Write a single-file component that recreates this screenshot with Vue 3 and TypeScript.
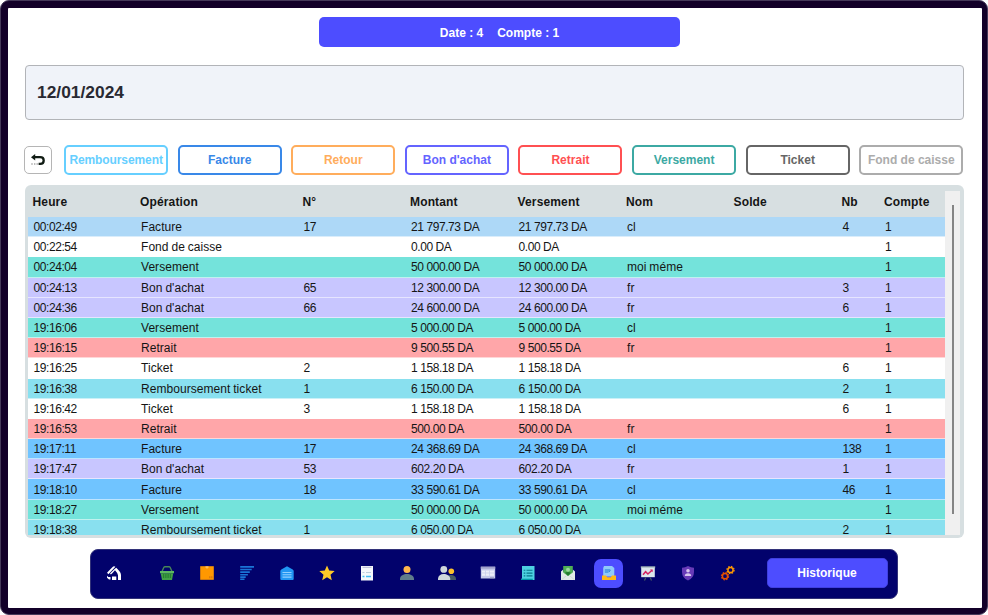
<script setup lang="ts">
interface Filter { label: string; tone: string }
interface Row { tone: string; cells: string[] }

const filters: Filter[] = [
  { label: 'Remboursement', tone: 'f-cyan' },
  { label: 'Facture', tone: 'f-blue' },
  { label: 'Retour', tone: 'f-orange' },
  { label: "Bon d'achat", tone: 'f-violet' },
  { label: 'Retrait', tone: 'f-red' },
  { label: 'Versement', tone: 'f-teal' },
  { label: 'Ticket', tone: 'f-dark' },
  { label: 'Fond de caisse', tone: 'f-grey' },
]

const headers: string[] = ['Heure', 'Opération', 'N°', 'Montant', 'Versement', 'Nom', 'Solde', 'Nb', 'Compte']

const entry = (tone: string, time: string, op: string, no: string, amount: string, name: string, nb: string): Row => ({
  tone,
  cells: [time, op, no, `${amount} DA`, `${amount} DA`, name, '', nb, '1'],
})

const rows: Row[] = [
  entry('r-pale', '00:02:49', 'Facture', '17', '21 797.73', 'cl', '4'),
  entry('r-white', '00:22:54', 'Fond de caisse', '', '0.00', '', ''),
  entry('r-teal', '00:24:04', 'Versement', '', '50 000.00', 'moi méme', ''),
  entry('r-violet', '00:24:13', "Bon d'achat", '65', '12 300.00', 'fr', '3'),
  entry('r-violet', '00:24:36', "Bon d'achat", '66', '24 600.00', 'fr', '6'),
  entry('r-teal', '19:16:06', 'Versement', '', '5 000.00', 'cl', ''),
  entry('r-red', '19:16:15', 'Retrait', '', '9 500.55', 'fr', ''),
  entry('r-white', '19:16:25', 'Ticket', '2', '1 158.18', '', '6'),
  entry('r-cyan', '19:16:38', 'Remboursement ticket', '1', '6 150.00', '', '2'),
  entry('r-white', '19:16:42', 'Ticket', '3', '1 158.18', '', '6'),
  entry('r-red', '19:16:53', 'Retrait', '', '500.00', 'fr', ''),
  entry('r-blue', '19:17:11', 'Facture', '17', '24 368.69', 'cl', '138'),
  entry('r-violet', '19:17:47', "Bon d'achat", '53', '602.20', 'fr', '1'),
  entry('r-blue', '19:18:10', 'Facture', '18', '33 590.61', 'cl', '46'),
  entry('r-teal', '19:18:27', 'Versement', '', '50 000.00', 'moi méme', ''),
  entry('r-cyan', '19:18:38', 'Remboursement ticket', '1', '6 050.00', '', '2'),
]

// Amounts and times are set tight; the operation and name columns are not.
const isWord = (column: number): boolean => column === 1 || column === 5
</script>

<template>
  <div class="window">
    <main class="page">
      <div class="summary"><span>Date : 4</span><span>Compte : 1</span></div>

      <div class="date-field">12/01/2024</div>

      <div class="filters">
        <button class="back" aria-label="Retour">
          <svg width="16" height="16" viewBox="0 0 16 16">
            <path d="M3 5.200H10.200c2.300 0 3.500 1.300 3.500 3.200s-1.200 3.400-3.500 3.400H8.600" fill="none" stroke="#111c14" stroke-width="2.300" />
            <path d="M1 5.200 5.200 1.900v6.600z" fill="#111c14" />
            <path d="M1.300 11.200h1.400v1.500H1.300zM4 11.200h1.400v1.500H4zM6.500 11.200h1.400v1.500H6.500z" fill="#a6a6a6" />
          </svg>
        </button>
        <button v-for="f in filters" :key="f.label" class="filter" :class="f.tone">{{ f.label }}</button>
      </div>

      <section class="table">
        <div class="sheet">
          <div class="line head"><span v-for="h in headers" :key="h">{{ h }}</span></div>
          <div class="body">
            <div v-for="(r, i) in rows" :key="i" class="line row" :class="r.tone">
              <span v-for="(c, j) in r.cells" :key="j" :class="isWord(j) ? 'word' : 'num'">{{ c }}</span>
            </div>
          </div>
        </div>
        <div class="scroll"><div class="thumb"></div></div>
      </section>

      <nav class="dock">
        <a class="item home">
          <svg viewBox="0 0 14 14">
            <path d="M0 6.700 5.600.9Q7-.5 8.400.8L7 2.300 1.400 8.200z" fill="#fff" />
            <path d="M9.300 1.800 12.300 5Q14 6.800 14 9v5h-3V9.300Q11 7.500 8 4.300L5.300 7.200 3.900 8.500 3 7.500 7.600 2.900z" fill="#fff" />
            <path d="M5 10.500h4.300V14H5zM0 9.700l1.300 1.200h2.200v2.500H2L0 11.700z" fill="#fff" />
          </svg>
        </a>
        <a class="item">
          <svg viewBox="0 0 14 14">
            <path d="M2 5.500 3.800 1.500Q4.200.7 5 .7h4q.8 0 1.200.8L12 5.500" fill="none" stroke="#478558" stroke-width="1.400" />
            <path d="M0 5h14v2.200H0z" fill="#5cb760" /><path d="M.7 7.200h12.600L12 14H2z" fill="#43a047" />
            <path d="M3.700 8v4M5.900 8v4M8.100 8v4M10.300 8v4" stroke="#1f7a2b" />
          </svg>
        </a>
        <a class="item">
          <svg viewBox="0 0 14 14"><path d="M.2.2h13.600v13.600H.2z" fill="#ff9800" /><path d="M5.500.2h3v1.500L7 2.800 5.500 1.700z" fill="#ffbd5a" /><path d="M9 10.200h1.500v2H9zM11 10.200h1.500v2H11z" fill="#dc7b0d" /></svg>
        </a>
        <a class="item">
          <svg viewBox="0 0 14 14"><path d="M.2.900H14M.2 3.500h11.500M.2 6.100h9.600M.2 8.700h7.700M.2 11.100h5.500M.2 13.300h4.300" stroke="#1a74d6" stroke-width="1.600" /></svg>
        </a>
        <a class="item">
          <svg viewBox="0 0 14 14"><path d="M7 .2 12.700 3.400q1 .6 1 1.600v8q0 1-1 1H1.300q-1 0-1-1V5q0-1 1-1.600z" fill="#2196f3" /><path d="M2.500 6.500h9M2.500 8.800h9M2.500 11.100h9" stroke="#90d0ff" stroke-width="1.100" /></svg>
        </a>
        <a class="item">
          <svg class="big" viewBox="0 0 16 16"><path d="m8 .5 2.200 5 5.500.5-4.200 3.700 1.300 5.500L8 12.300l-4.800 2.900 1.300-5.500L.3 6l5.500-.5z" fill="#ffca28" /></svg>
        </a>
        <a class="item">
          <svg viewBox="0 0 14 14"><path d="M1 0h12v14.500H1z" fill="#f5f8fc" /><path d="M2.500 1.300h9" stroke="#b5b8d4" /><path d="M2.500 6.500h2M6 6.500h5" stroke="#bccddd" stroke-width="1.200" /><path d="M2.500 10.500h2M6 10.500h5" stroke="#42bdf3" stroke-width="1.500" /></svg>
        </a>
        <a class="item">
          <svg viewBox="0 0 14 14"><path d="M0 14v-1.500C.4 9.500 3.500 8 7 8s6.600 1.500 7 4.500V14z" fill="#607d8b" /><circle cx="7" cy="3.400" r="3.500" fill="#ffb74d" /></svg>
        </a>
        <a class="item">
          <svg class="wide" viewBox="0 0 18 14"><path d="M8 14V11q2-2 5-2 4.500 0 5 3.500V14z" fill="#455a64" /><path d="M0 14v-1.500C.4 9.500 2.500 8 5.700 8s6 1.500 6.500 4.500V14z" fill="#cfd8dc" /><circle cx="5.800" cy="3.400" r="3.400" fill="#cfd8dc" /><circle cx="13.300" cy="5.200" r="2.800" fill="#fbc02d" /></svg>
        </a>
        <a class="item right">
          <svg viewBox="0 0 14 14"><path d="M-.2.700h14.400v11.800H-.2z" fill="#c5cae9" /><path d="M-.2.700h14.400v2H-.2z" fill="#a0a2cc" /><path d="M1 4.500h12v5.300H1z" fill="#eceef8" /><path d="M1 7h12M4.500 4.500v5.300M8.500 4.500v5.300" stroke="#c5cae9" stroke-width=".7" /><path d="M9 11.500h4v1H9z" fill="#8185af" /></svg>
        </a>
        <a class="item right">
          <svg viewBox="0 0 14 14"><path d="M1 0h12.500v14H.2l.8-2z" fill="#4dd0e1" /><path d="M0 12.700h11.800V14H0z" fill="#0097a7" /><path d="M2.700 4.300h1.600M5.500 4.300h6M2.700 7.100h1.600M5.500 7.100h6M2.700 9.900h1.600M5.500 9.900h6" stroke="#08778c" stroke-width="1.100" /></svg>
        </a>
        <a class="item right">
          <svg viewBox="0 0 14 14"><path d="M0 5.500 2.200 3.500v2L7 9.500l4.800-4v-2L14 5.500V14H0z" fill="#e1eae8" /><path d="M2.200 0h9.600v6.500L7 10 2.200 6.500z" fill="#4fae54" /><circle cx="7" cy="3.800" r="2" fill="#9bd79d" /><path d="M4 6.500Q7 5.500 10 6.500L7 9.700z" fill="#237a30" /><path d="m.5 13.700 5-4M13.500 13.700l-5-4" stroke="#b8c8c5" stroke-width=".5" /></svg>
        </a>
        <a class="item active">
          <svg viewBox="0 0 14 14"><path d="M2 0h8l2.300 2v8.500H1.200V2z" fill="#90caf9" /><path d="M2.800 4h5.500M2.800 6h3.700M8.200 4.500 6.800 6" stroke="#1976d2" /><path d="M0 9.500h4l1.200 1.800h3.600L10 9.500h4V14H0z" fill="#ffb916" /></svg>
        </a>
        <a class="item right">
          <svg viewBox="0 0 14 14"><path d="M-.2.200h14.400v2H-.2z" fill="#90a4ae" /><path d="M.2 1.500h13.600v9.700H.2z" fill="#dce8ec" /><path d="m4.800 11.500-1.300 3M9.200 11.500l1.300 3" stroke="#455a64" stroke-width="1.200" /><path d="m2 8.700 2.600-3L6.900 8 11 4.300" fill="none" stroke="#d42261" stroke-width="1.500" /><path d="M9 3.500h2.700v2.700z" fill="#d42261" /></svg>
        </a>
        <a class="item right">
          <svg viewBox="0 0 14 14"><path d="M7 0q3 1.500 6 1.700V6q0 5.700-6 8.500Q1 11.700 1 6V1.700Q4 1.500 7 0z" fill="#673ab7" /><circle cx="7" cy="4.700" r="1.800" fill="#d7c6ee" /><path d="M3.800 9.900q0-2.700 3.200-2.700t3.200 2.700z" fill="#d7c6ee" /></svg>
        </a>
        <a class="item right">
          <svg viewBox="0 0 14 14"><circle cx="9.500" cy="4" r="2.600" fill="none" stroke="#ff9800" stroke-width="1.500" /><circle cx="9.500" cy="4" r="3.600" fill="none" stroke="#ff9800" stroke-width="1.200" stroke-dasharray="1.500 1.330" /><circle cx="4" cy="10.200" r="2.600" fill="none" stroke="#e65100" stroke-width="1.500" /><circle cx="4" cy="10.200" r="3.600" fill="none" stroke="#e65100" stroke-width="1.200" stroke-dasharray="1.500 1.330" /></svg>
        </a>
        <button class="history">Historique</button>
      </nav>
    </main>
  </div>
</template>

<style>
body { background: #fff; }
</style>

<style scoped>
* { box-sizing: border-box; }
.window { width: 988px; height: 615px; padding: 7px 5px 6px 7px; background: #130029; border: 1px solid #463a5a; border-radius: 9px; font-family: "Liberation Sans", Arial, sans-serif; font-size: 12px; color: #151515; }
button { font: inherit; padding: 0; background: #fff; white-space: nowrap; }
.page { height: 100%; background: #fff; border-radius: 1px; padding: 9px 18px 0 16px; display: flex; flex-direction: column; }
.summary { width: 361px; height: 30px; margin-left: 295px; background: #4d4dff; border-radius: 5px; color: #fff; font-weight: bold; display: flex; gap: 14px; align-items: center; justify-content: center; padding-top: 1px; }
.date-field { height: 55px; width: 939px; margin: 18px 0 0 1px; padding-left: 11px; border: 1px solid #b2b4b8; border-radius: 4px; background: #f0f3f9; font-size: 17.400px; font-weight: bold; color: #292932; display: flex; align-items: center; }
.filters { display: flex; align-items: center; margin-top: 25px; height: 30px; gap: 9.600px; }
.back { width: 28px; height: 28px; margin: 0 2.500px 1px 0; border: 1px solid #b5b5b5; border-radius: 5px; display: flex; align-items: center; justify-content: center; }
.back svg { display: block; }
.filter { width: 104px; height: 30px; border: 2px solid currentColor; border-radius: 5px; font-weight: bold; flex: none; }
.f-cyan { color: #66cfff; letter-spacing: -.1px; }
.f-blue { color: #3988e8; }
.f-orange { color: #ffad5c; }
.f-violet { color: #6464ff; }
.f-red { color: #ff5052; }
.f-teal { color: #3ca9a3; }
.f-dark { color: #666; }
.f-grey { color: #acacac; }
.table { display: flex; width: 939px; height: 353px; margin: 10px 0 0 1px; padding: 3px; background: #d7dfe1; border-radius: 6px; }
.sheet { width: 917px; display: flex; flex-direction: column; }
.line { display: grid; grid-template-columns: 107.500px 162.500px 107.500px 107.500px 108.500px 107.500px 108px 42.500px 65.500px; align-items: center; white-space: pre; }
.head { height: 28px; font-weight: bold; letter-spacing: .15px; padding-left: 4.500px; margin-right: -4px; flex: none; }
.body { flex: 1; margin-top: 1px; overflow: hidden; }
.row { height: 20.200px; padding: 1px 0 0 5.500px; border-bottom: 1px solid rgba(255, 255, 255, .55); overflow: hidden; }
.num { letter-spacing: -.42px; }
.word { letter-spacing: .05px; word-spacing: -.5px; }
.r-pale { background: #add8f7; }
.r-white { background: #fff; }
.r-teal { background: #74e3db; }
.r-violet { background: #c8c6ff; }
.r-red { background: #ffa6a9; }
.r-cyan { background: #89e0ef; }
.r-blue { background: #70c4ff; }
.scroll { width: 15px; margin-top: 3px; padding: 14px 0 0 7px; background: #f0f0f0; }
.thumb { width: 2px; height: 309px; background: #858585; }
.dock { width: 808px; height: 50px; margin: 11px 0 0 66px; padding: 0 0 2px 3px; display: flex; align-items: center; background: #02026c; border: 1px solid #333379; border-radius: 8px; flex: none; }
.item { width: 40px; height: 29px; display: flex; align-items: center; justify-content: center; flex: none; }
.item svg { width: 14px; height: 14px; display: block; overflow: visible; flex: none; }
.item .big { width: 16px; height: 16px; }
.item .wide { width: 18px; }
.item.right { padding-left: 2px; }
.home { margin-right: 13px; }
.active { width: 29px; margin: 0 4px 0 7px; background: #4d4dff; border-radius: 7px; }
.history { width: 121px; height: 30px; margin-left: 20px; padding-right: 1px; border: 1px solid #4040df; background: #4d4dff; border-radius: 5px; color: #fff; font-weight: bold; }
</style>
